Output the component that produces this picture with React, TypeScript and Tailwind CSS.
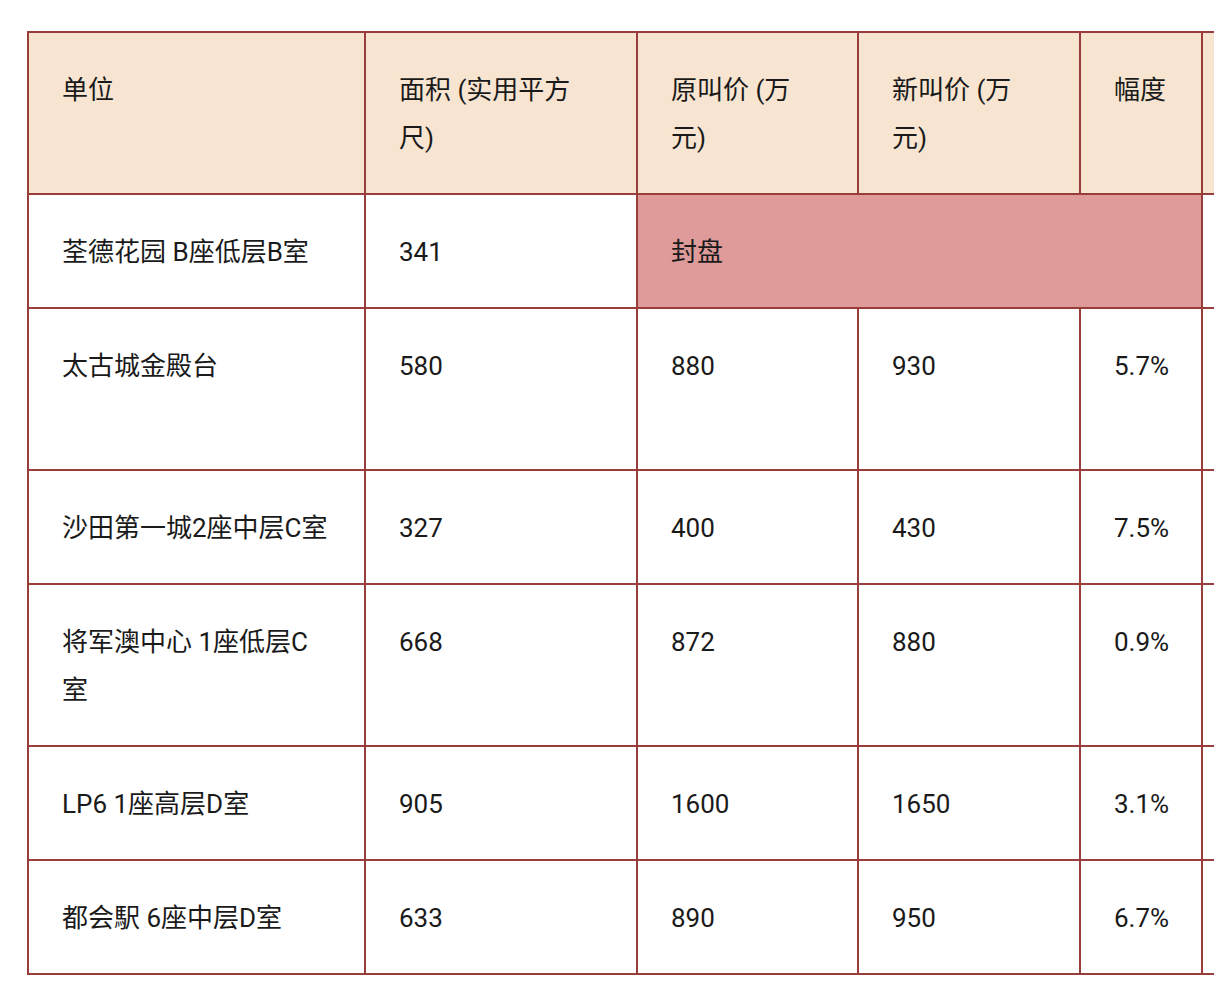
const rows = [
  { unit: "太古城金殿台", area: "580", oldPrice: "880", newPrice: "930", change: "5.7%", tall: true },
  { unit: "沙田第一城2座中层C室", area: "327", oldPrice: "400", newPrice: "430", change: "7.5%" },
  { unit: <>将军澳中心 1座低层C<br />室</>, area: "668", oldPrice: "872", newPrice: "880", change: "0.9%" },
  { unit: "LP6 1座高层D室", area: "905", oldPrice: "1600", newPrice: "1650", change: "3.1%" },
  { unit: "都会駅 6座中层D室", area: "633", oldPrice: "890", newPrice: "950", change: "6.7%" },
];

const cell = "border-2 border-[#993d3b] pl-[33px] pr-[31px] pt-[33px] pb-[31px] align-top text-left font-normal";

export default function App() {
  return (
    <div className="w-[1214px] h-[996px] overflow-hidden bg-white">
      <table
        className="ml-[27px] mt-[31px] border-collapse table-fixed w-[1380px] text-[26px] leading-[48px] text-[#1a1a1a]"
        style={{ fontFamily: 'Roboto, "Noto Sans CJK SC", sans-serif' }}
      >
        <colgroup>
          <col className="w-[337px]" />
          <col className="w-[272px]" />
          <col className="w-[221px]" />
          <col className="w-[222px]" />
          <col className="w-[122px]" />
          <col className="w-[206px]" />
        </colgroup>
        <thead>
          <tr className="bg-[#f7e5d1]">
            <th className={cell}>单位</th>
            <th className={cell}>面积 (实用平方<br />尺)</th>
            <th className={cell}>原叫价 (万<br />元)</th>
            <th className={cell}>新叫价 (万<br />元)</th>
            <th className={cell}>幅度</th>
            <th className={cell}></th>
          </tr>
        </thead>
        <tbody>
          <tr>
            <td className={cell}>荃德花园 B座低层B室</td>
            <td className={cell}>341</td>
            <td className={`${cell} bg-[#de9b9a]`} colSpan={3}>封盘</td>
            <td className={cell}></td>
          </tr>
          {rows.map((r, i) => (
            <tr key={i}>
              <td className={`${cell} ${r.tall ? "h-[162px]" : ""}`}>{r.unit}</td>
              <td className={cell}>{r.area}</td>
              <td className={cell}>{r.oldPrice}</td>
              <td className={cell}>{r.newPrice}</td>
              <td className={cell}>{r.change}</td>
              <td className={cell}></td>
            </tr>
          ))}
        </tbody>
      </table>
    </div>
  );
}
